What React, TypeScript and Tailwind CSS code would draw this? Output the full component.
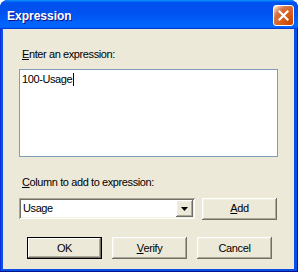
import React from "react";

const raised =
  "bg-[#ece9d8] shadow-[inset_-1px_-1px_#716f64,inset_1px_1px_#ffffff,inset_-2px_-2px_#aca899,inset_2px_2px_#f1efe2]";

function Btn({ children, isDefault }: { children: React.ReactNode; isDefault?: boolean }) {
  return (
    <button
      className={`w-[75px] h-[22px] flex items-center justify-center text-black ${raised} ${
        isDefault ? "outline outline-1 outline-black -outline-offset-1 shadow-[inset_-2px_-2px_#716f64,inset_2px_2px_#ffffff,inset_-3px_-3px_#aca899]" : ""
      }`}
    >
      {children}
    </button>
  );
}

export default function App() {
  return (
    <div className="w-[298px] h-[272px] bg-white font-['Liberation_Sans',Arial,sans-serif] text-[11px] tracking-[-0.4px] text-black">
      <div className="w-full h-full rounded-t-[8px] bg-[#0a4fe6] shadow-[inset_-1px_-1px_#00138c,inset_1px_0_#0831d9] flex flex-col overflow-hidden">
        {/* title bar */}
        <div className="h-[29px] shrink-0 flex items-start justify-between pl-[7px] pr-[4px] bg-[linear-gradient(180deg,#0997ff,#0053ee_8%,#0050ee_40%,#0066ff_88%,#0066ff_93%,#005bff_95%,#003dd7_96%,#003dd7)]">
          <span className="mt-[9px] leading-[14px] text-[12px] tracking-normal font-bold text-white [text-shadow:1px_1px_#0f1089]">
            Expression
          </span>
          <div className="mt-[5px] w-[21px] h-[21px] rounded-[3px] border border-white flex items-center justify-center bg-[radial-gradient(circle_at_90%_90%,#cc4600_0,#dc6527_55%,#cd7546_70%,#ffccb2_90%,#ffffff_100%)]">
            <svg width="11" height="11" viewBox="0 0 11 11">
              <path d="M1.5 1.5 L9.5 9.5 M9.5 1.5 L1.5 9.5" stroke="#fff" strokeWidth="2.2" strokeLinecap="square" />
            </svg>
          </div>
        </div>
        {/* client */}
        <div className="flex-1 mx-[3px] mr-[4px] mb-[3px] bg-[#ece9d8] pl-[16px] pt-[19px] flex flex-col">
          <label className="leading-[13px] pl-[3px]">
            <span className="underline">E</span>nter an expression:
          </label>
          <div className="mt-[8px] w-[259px] h-[88px] bg-white border border-[#7f9db9] px-[2px] pt-[3px] leading-[13px] flex items-start">
            <span>100-Usage</span>
            <span className="ml-[1px] w-px h-[13px] bg-black" />
          </div>
          <label className="mt-[19px] leading-[13px] pl-[3px]">
            <span className="underline">C</span>olumn to add to expression:
          </label>
          <div className="mt-[8px] flex items-center h-[23px]">
            <div className="w-[176px] h-[21px] bg-white shadow-[inset_1px_1px_#aca899,inset_-1px_-1px_#ffffff,inset_2px_2px_#716f64,inset_-2px_-2px_#f1efe2] flex items-center pl-[4px] pr-[2px]">
              <span className="flex-1 leading-[13px]">Usage</span>
              <div className={`w-[17px] h-[17px] flex items-center justify-center ${raised}`}>
                <svg width="7" height="4" viewBox="0 0 7 4">
                  <path d="M0 0 H7 L3.5 4 Z" fill="#000" />
                </svg>
              </div>
            </div>
            <div className="ml-[7px]">
              <Btn>
                <span className="underline">A</span>dd
              </Btn>
            </div>
          </div>
          <div className="mt-[17px] pl-[8px] flex gap-[10px]">
            <Btn isDefault>OK</Btn>
            <Btn>
              <span className="underline">V</span>erify
            </Btn>
            <Btn>Cancel</Btn>
          </div>
        </div>
      </div>
    </div>
  );
}
